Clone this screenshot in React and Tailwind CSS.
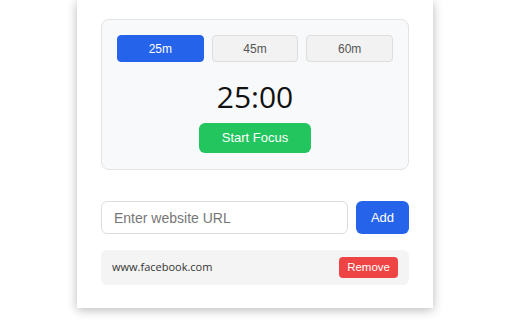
import React, { useState } from 'react'

const durations = [25, 45, 60]

const App = () => {
  const [active, setActive] = useState(25)
  const [url, setUrl] = useState('')
  const [sites, setSites] = useState(['www.facebook.com'])

  const addSite = () => {
    if (!url.trim()) return
    setSites([...sites, url.trim()])
    setUrl('')
  }

  return (
    <div className="w-[512px] h-[320px] bg-white overflow-hidden flex pl-[77px] font-['Open_Sans',sans-serif]">
      <div className="w-[356px] h-[308px] bg-white shadow-[0_2px_10px_rgba(0,0,0,0.28)] px-6 pt-[19px] pb-6 flex flex-col">
        <div className="bg-[#f8f9fa] border border-[#e3e3e3] rounded-lg px-[15px] pt-[15px] pb-[16px] flex flex-col items-center">
          <div className="w-full grid grid-cols-3 gap-2">
            {durations.map((d) => (
              <button
                key={d}
                onClick={() => setActive(d)}
                className={
                  d === active
                    ? "h-[27px] rounded-[4px] border border-[#2563eb] bg-[#2563eb] text-white text-[12px] font-['Liberation_Sans',Arial,sans-serif]"
                    : "h-[27px] rounded-[4px] border border-[#dddddd] bg-[#f2f2f2] text-[#555555] text-[12px] font-['Liberation_Sans',Arial,sans-serif]"
                }
              >
                {d}m
              </button>
            ))}
          </div>
          <div className="mt-[13px] text-[30px] leading-[44px] text-[#111111]">{active}:00</div>
          <button className="mt-[4px] w-[112px] h-[30px] rounded-md bg-[#22c55e] text-white text-[13px] font-['Liberation_Sans',Arial,sans-serif]">
            Start Focus
          </button>
        </div>

        <div className="mt-[31px] flex gap-2">
          <input
            value={url}
            onChange={(e) => setUrl(e.target.value)}
            placeholder="Enter website URL"
            className="flex-1 h-[33px] rounded-md border border-[#dddddd] px-3 text-[14px] text-[#333333] placeholder:text-[#777777] outline-none font-['Liberation_Sans',Arial,sans-serif]"
          />
          <button
            onClick={addSite}
            className="w-[53px] h-[33px] rounded-md bg-[#2563eb] text-white text-[13px] font-['Liberation_Sans',Arial,sans-serif]"
          >
            Add
          </button>
        </div>

        <div className="mt-4 flex flex-col gap-2">
          {sites.map((s) => (
            <div key={s} className="h-[35px] bg-[#f4f4f4] rounded-md pl-[11px] pr-[11px] flex items-center justify-between">
              <span className="text-[11px] text-[#333333]">{s}</span>
              <button
                onClick={() => setSites(sites.filter((x) => x !== s))}
                className="h-[21px] px-2 rounded-[4px] bg-[#ef4444] text-white text-[11.5px] font-['Liberation_Sans',Arial,sans-serif]"
              >
                Remove
              </button>
            </div>
          ))}
        </div>
      </div>
    </div>
  )
}

export default App
